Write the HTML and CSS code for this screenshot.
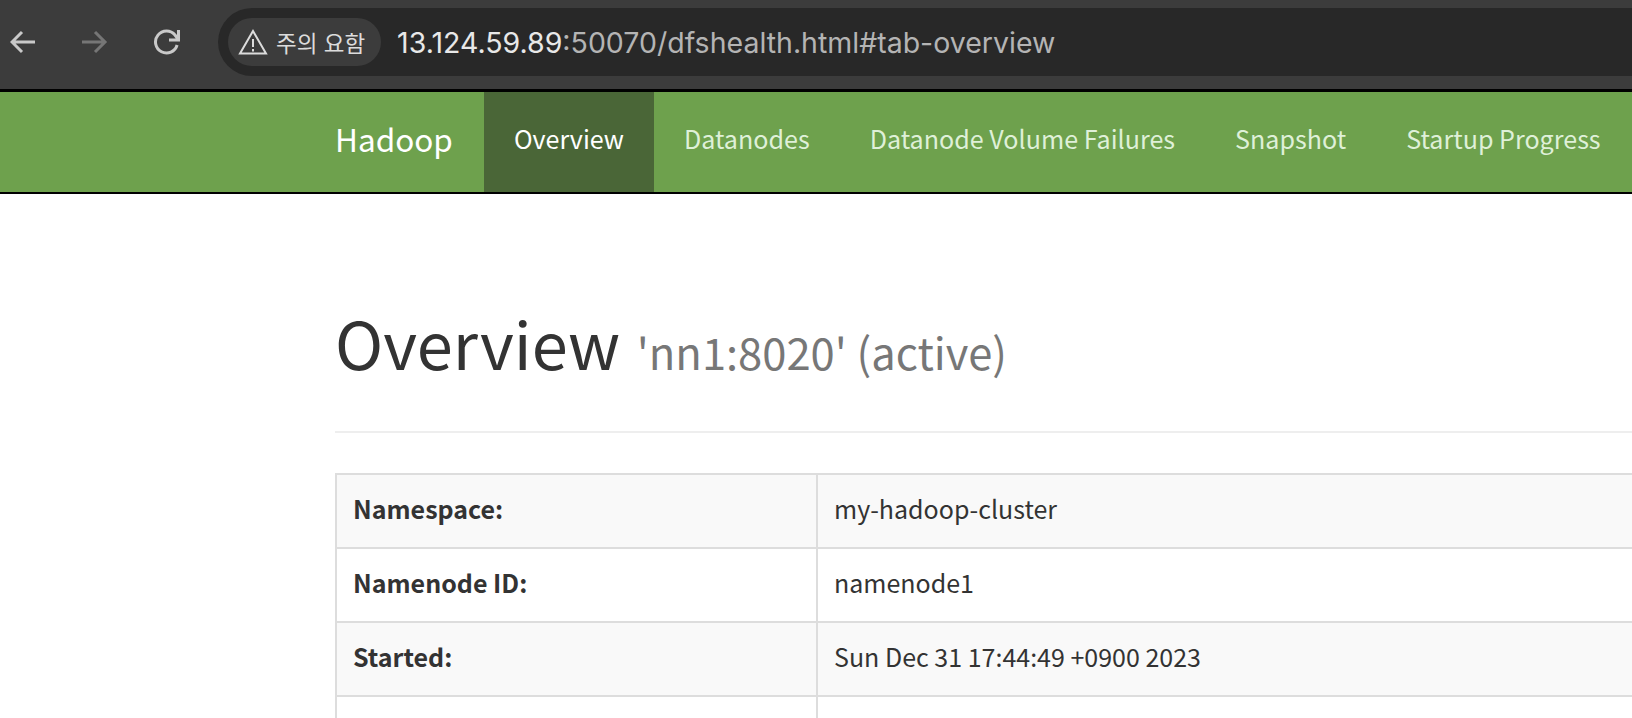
FILE: index.html
```html
<!DOCTYPE html>
<html lang="en">
<head>
    <meta charset="UTF-8">
    <meta name="viewport" content="width=device-width, initial-scale=1.0">
    <title>Namenode information</title>
    <link rel="stylesheet" href="styles.css">
</head>
<body>

    <!-- Browser toolbar -->
    <div class="toolbar">
        <div class="tool-buttons">
            <svg class="tool-icon" viewBox="0 0 26 26"><path d="M25 13H3M12 3L2 13l10 10"/></svg>
            <svg class="tool-icon dim" viewBox="0 0 26 26"><path d="M0 13h22M13 3l10 10-10 10"/></svg>
            <svg class="tool-icon" viewBox="0 0 26 26"><path d="M23.100 16A11 11 0 1 1 21 6L24 10M24.500 1V11H15"/></svg>
        </div>
        <div class="address">
            <div class="warning">
                <svg class="warning-icon" viewBox="0 0 30 26"><path class="warning-line" d="M15 2L2 24.500h26z"/><path class="warning-line" d="M15 10v8M15 20v2.500"/></svg>
                <span lang="ko">주의 요함</span>
            </div>
            <div class="url"><span class="host">13.124.59.89</span>:50070/dfshealth.html#tab-overview</div>
        </div>
    </div>

    <!-- Top Navigation Bar -->
    <nav class="navbar">
        <a class="brand" href="#">Hadoop</a>
        <ul>
            <li><a class="active" href="#">Overview</a></li>
            <li><a href="#">Datanodes</a></li>
            <li><a href="#">Datanode Volume Failures</a></li>
            <li><a href="#">Snapshot</a></li>
            <li><a href="#">Startup Progress</a></li>
        </ul>
    </nav>

    <div class="container">
        <div class="page-header">
            <h1>Overview <small>'nn1:8020' (active)</small></h1>
        </div>

        <table>
            <tr>
                <th>Namespace:</th>
                <td>my-hadoop-cluster</td>
            </tr>
            <tr>
                <th>Namenode ID:</th>
                <td>namenode1</td>
            </tr>
            <tr>
                <th>Started:</th>
                <td>Sun Dec 31 17:44:49 +0900 2023</td>
            </tr>
            <tr>
                <th>&nbsp;</th>
                <td>&nbsp;</td>
            </tr>
        </table>
    </div>
</body>
</html>
```

FILE: styles.css
```css
html, body {
    height: 718px;
    overflow: hidden;
}

body {
    margin: 0;
    padding: 0;
    background-color: #fff;
    color: #333;
    font-family: "Noto Sans CJK KR", "Noto Sans", sans-serif;
}

/* Browser toolbar */
.toolbar {
    display: flex;
    align-items: flex-start;
    height: 92px;
    padding-top: 8px;
    box-sizing: border-box;
    background-color: #3c3c3c;
    border-bottom: 3px solid #000;
}

.tool-buttons {
    display: flex;
    align-items: center;
    gap: 46px;
    width: 218px;
    height: 68px;
    padding-left: 10px;
    box-sizing: border-box;
}

.tool-icon {
    width: 26px;
    height: 26px;
    fill: none;
    stroke: #c9c9c9;
    stroke-width: 3;
}

.tool-icon.dim {
    stroke: #767676;
}

.address {
    display: flex;
    align-items: center;
    flex: 1;
    height: 68px;
    padding-left: 10px;
    background-color: #282828;
    border-radius: 34px 0 0 34px;
}

.warning {
    display: flex;
    align-items: center;
    gap: 8px;
    height: 48px;
    padding: 0 16px 0 10px;
    background-color: #3c3c3c;
    border-radius: 24px;
    color: #dcdcdc;
    font-size: 22.5px;
}

.warning-icon {
    width: 30px;
    height: 26px;
}

.warning-line {
    fill: none;
    stroke: #dcdcdc;
    stroke-width: 2;
}

.url {
    margin-left: 16px;
    color: #b4b4b4;
    font-family: Inter, Roboto, sans-serif;
    font-size: 28.5px;
    white-space: nowrap;
}

.host {
    color: #e8e8e8;
}

/* Green navigation bar */
.navbar {
    display: flex;
    align-items: stretch;
    height: 100px;
    padding-left: 335px;
    background-color: #6ea14d;
    border-bottom: 2px solid #000;
}

.brand {
    align-self: center;
    margin-right: 31px;
    padding-bottom: 8px;
    color: #fff;
    font-size: 31.5px;
    text-decoration: none;
}

.navbar ul {
    display: flex;
    list-style-type: none;
    margin: 0;
    padding: 0;
}

.navbar ul li a {
    display: flex;
    align-items: center;
    height: 100%;
    padding: 0 30px 8px;
    box-sizing: border-box;
    color: #dff0d8;
    font-size: 25.1px;
    text-decoration: none;
    white-space: nowrap;
}

.navbar ul li a.active {
    background-color: #4a6637;
    color: #fff;
}

/* Page content */
.container {
    width: 2340px;
    margin-left: 335px;
}

.page-header {
    height: 239px;
    box-sizing: border-box;
    padding-top: 108px;
    border-bottom: 2px solid #eee;
}

h1 {
    margin: 0;
    font-size: 65px;
    font-weight: 400;
    line-height: 80px;
}

h1 small {
    margin-left: 2px;
    color: #777;
    font-size: 43.5px;
    font-weight: 400;
}

/* Striped overview table */
table {
    width: 100%;
    margin-top: 40px;
    border-collapse: collapse;
    border: 2px solid #ddd;
    font-size: 25px;
}

th, td {
    height: 74px;
    box-sizing: border-box;
    padding: 0 16px 7px;
    border: 2px solid #ddd;
    text-align: left;
}

th {
    width: 481px;
    font-weight: 600;
}

tr:nth-child(odd) {
    background-color: #f9f9f9;
}
```
